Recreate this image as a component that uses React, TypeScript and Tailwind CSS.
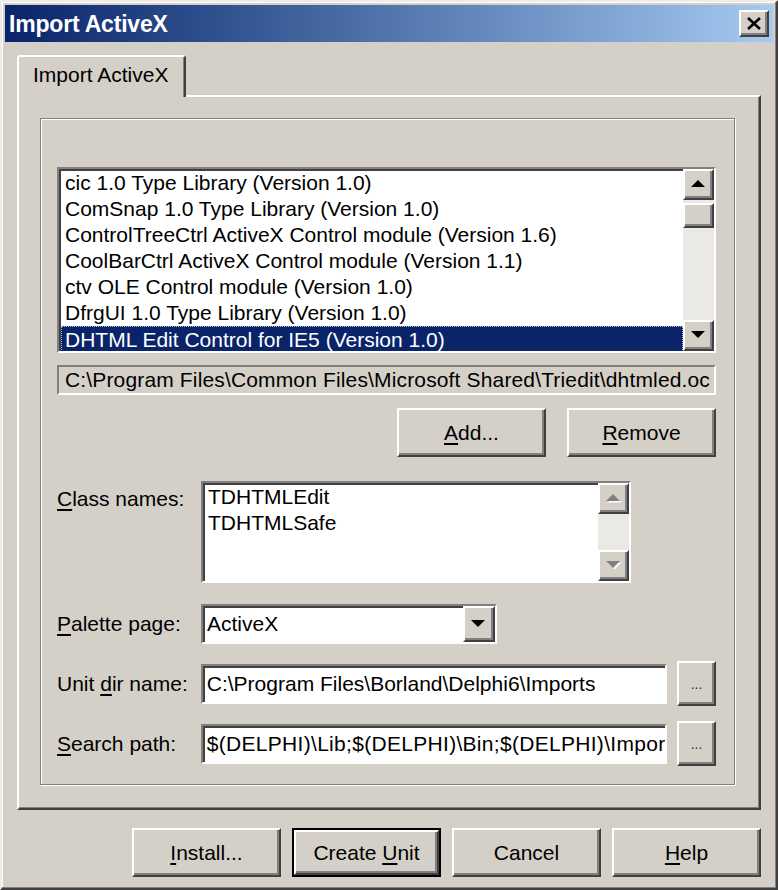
import React from "react";

const raised =
  "bg-[#d4d0c8] border-2 border-t-white border-l-white border-r-[#404040] border-b-[#404040] shadow-[inset_-2px_-2px_0_#808080]";
const sunken =
  "border-2 border-t-[#808080] border-l-[#808080] border-r-white border-b-white shadow-[inset_2px_2px_0_#404040]";

function U({ children }: { children: React.ReactNode }) {
  return <span className="underline underline-offset-[3px] decoration-[2px]">{children}</span>;
}

function Arrow({ down = false, disabled = false }: { down?: boolean; disabled?: boolean }) {
  const pts = down ? "0,0 14,0 7,7" : "0,7 14,7 7,0";
  return (
    <svg width="16" height="9" viewBox="0 0 16 9">
      {disabled && <polygon points={pts} transform="translate(1.5,1.5)" fill="#ffffff" />}
      <polygon points={pts} fill={disabled ? "#808080" : "#000000"} />
    </svg>
  );
}

function ScrollBtn({ down = false, disabled = false }: { down?: boolean; disabled?: boolean }) {
  return (
    <div className={`${raised} h-[31px] w-full flex items-center justify-center shrink-0`}>
      <Arrow down={down} disabled={disabled} />
    </div>
  );
}

function PushButton({
  children,
  width = "w-[149px]",
  isDefault = false,
}: {
  children: React.ReactNode;
  width?: string;
  isDefault?: boolean;
}) {
  if (isDefault) {
    return (
      <div className={`${width} h-[49px] border-2 border-black`}>
        <div className={`${raised} h-full w-full flex items-center justify-center`}>{children}</div>
      </div>
    );
  }
  return <div className={`${raised} ${width} h-[49px] flex items-center justify-center`}>{children}</div>;
}

const items = [
  "cic 1.0 Type Library (Version 1.0)",
  "ComSnap 1.0 Type Library (Version 1.0)",
  "ControlTreeCtrl ActiveX Control module (Version 1.6)",
  "CoolBarCtrl ActiveX Control module (Version 1.1)",
  "ctv OLE Control module (Version 1.0)",
  "DfrgUI 1.0 Type Library (Version 1.0)",
];

export default function App() {
  return (
    <div className="w-[778px] h-[890px] bg-[#d4d0c8] border-2 border-t-[#eeece8] border-l-[#eeece8] border-r-[#404040] border-b-[#404040] shadow-[inset_-1px_-1px_0_#808080,inset_1px_1px_0_#fff] p-[3px] text-black text-[21px] leading-[26px] font-['Liberation_Sans',Arial,sans-serif] overflow-hidden">
      {/* Title bar */}
      <div className="h-[37px] bg-linear-to-r from-[#0a246a] to-[#a6caf0] flex items-center justify-between pl-[4px] pr-[4px]">
        <span className="text-white font-bold text-[23px] tracking-[-0.2px]">Import ActiveX</span>
        <div className={`${raised} w-[30px] h-[27px] flex items-center justify-center`}>
          <svg width="14" height="13" viewBox="0 0 14 13">
            <path d="M1 1 L13 12 M13 1 L1 12" stroke="#000" strokeWidth="2.6" />
          </svg>
        </div>
      </div>

      <div className="mx-[12px] mt-[13px]">
        {/* Tab */}
        <div className="relative z-10 -mb-[2px] w-[169px] h-[42px] bg-[#d4d0c8] border-2 border-b-0 border-t-white border-l-white border-r-[#404040] shadow-[inset_-1px_0_0_#808080] rounded-t-[3px] flex items-center pl-[14px] pb-[4px]">
          Import ActiveX
        </div>

        {/* Tab panel */}
        <div className="h-[715px] border-2 border-t-white border-l-white border-r-[#404040] border-b-[#404040] shadow-[inset_-1px_-1px_0_#808080] pl-[21px] pt-[21px] pr-[24px]">
          {/* Group box */}
          <div className="h-[667px] border border-[#808080] shadow-[inset_1px_1px_0_#fff,1px_1px_0_#fff] pl-[16px] pr-[18px] pt-[48px] flex flex-col">
            {/* Listbox */}
            <div className={`${sunken} h-[186px] bg-white flex`}>
              <div className="flex-1 min-w-0 pt-[1px] pl-[2px] overflow-hidden">
                {items.map((t) => (
                  <div key={t} className="h-[26px] pl-[4px] whitespace-nowrap">
                    {t}
                  </div>
                ))}
                <div className="h-[26px] pl-[3px] whitespace-nowrap bg-[#0a246a] text-white border border-dotted border-[#b8b8d8]">
                  DHTML Edit Control for IE5 (Version 1.0)
                </div>
              </div>
              <div className="w-[31px] flex flex-col bg-[#ebe9e5]">
                <ScrollBtn />
                <div className={`${raised} h-[25px] mt-[3px]`} />
                <div className="flex-1" />
                <ScrollBtn down />
              </div>
            </div>

            {/* Path */}
            <div className="mt-[12px] h-[30px] border-2 border-t-[#808080] border-l-[#808080] border-r-white border-b-white pl-[6px] whitespace-nowrap overflow-hidden flex items-center tracking-[0.15px]">
              {"C:\\Program Files\\Common Files\\Microsoft Shared\\Triedit\\dhtmled.oc"}
            </div>

            {/* Add / Remove */}
            <div className="mt-[13px] flex justify-end gap-[21px]">
              <PushButton>
                <span>
                  <U>A</U>dd...
                </span>
              </PushButton>
              <PushButton>
                <span>
                  <U>R</U>emove
                </span>
              </PushButton>
            </div>

            {/* Class names */}
            <div className="mt-[24px] flex">
              <div className="w-[144px] mt-[5px]">
                <U>C</U>lass names:
              </div>
              <div className={`${sunken} w-[430px] h-[102px] bg-white flex`}>
                <div className="flex-1 pl-[5px] pt-[1px]">
                  <div>TDHTMLEdit</div>
                  <div>TDHTMLSafe</div>
                </div>
                <div className="w-[31px] flex flex-col bg-[#ebe9e5]">
                  <ScrollBtn disabled />
                  <div className="flex-1" />
                  <ScrollBtn down disabled />
                </div>
              </div>
            </div>

            {/* Palette page */}
            <div className="mt-[21px] flex items-center h-[40px]">
              <div className="w-[144px]">
                <U>P</U>alette page:
              </div>
              <div className={`${sunken} w-[296px] h-[40px] bg-white flex`}>
                <div className="flex-1 pl-[4px] flex items-center">ActiveX</div>
                <div className={`${raised} w-[32px] h-full flex items-center justify-center`}>
                  <Arrow down />
                </div>
              </div>
            </div>

            {/* Unit dir name */}
            <div className="mt-[17px] flex items-center h-[45px]">
              <div className="w-[144px]">
                Unit <U>d</U>ir name:
              </div>
              <div className={`${sunken} w-[467px] h-[40px] bg-white pl-[4px] flex items-center whitespace-nowrap overflow-hidden`}>
                {"C:\\Program Files\\Borland\\Delphi6\\Imports"}
              </div>
              <div className={`${raised} ml-[10px] w-[39px] h-[45px] flex items-center justify-center text-[14px] text-[#333]`}>
                ...
              </div>
            </div>

            {/* Search path */}
            <div className="mt-[15px] flex items-center h-[45px]">
              <div className="w-[144px]">
                <U>S</U>earch path:
              </div>
              <div className={`${sunken} w-[467px] h-[40px] bg-white pl-[4px] flex items-center whitespace-nowrap overflow-hidden tracking-[0.3px]`}>
                {"$(DELPHI)\\Lib;$(DELPHI)\\Bin;$(DELPHI)\\Impor"}
              </div>
              <div className={`${raised} ml-[10px] w-[39px] h-[45px] flex items-center justify-center text-[14px] text-[#333]`}>
                ...
              </div>
            </div>
          </div>
        </div>

        {/* Dialog buttons */}
        <div className="mt-[18px] flex justify-end gap-[11px]">
          <PushButton>
            <span>
              <U>I</U>nstall...
            </span>
          </PushButton>
          <PushButton isDefault>
            <span>
              Create <U>U</U>nit
            </span>
          </PushButton>
          <PushButton>Cancel</PushButton>
          <PushButton>
            <span>
              <U>H</U>elp
            </span>
          </PushButton>
        </div>
      </div>
    </div>
  );
}
